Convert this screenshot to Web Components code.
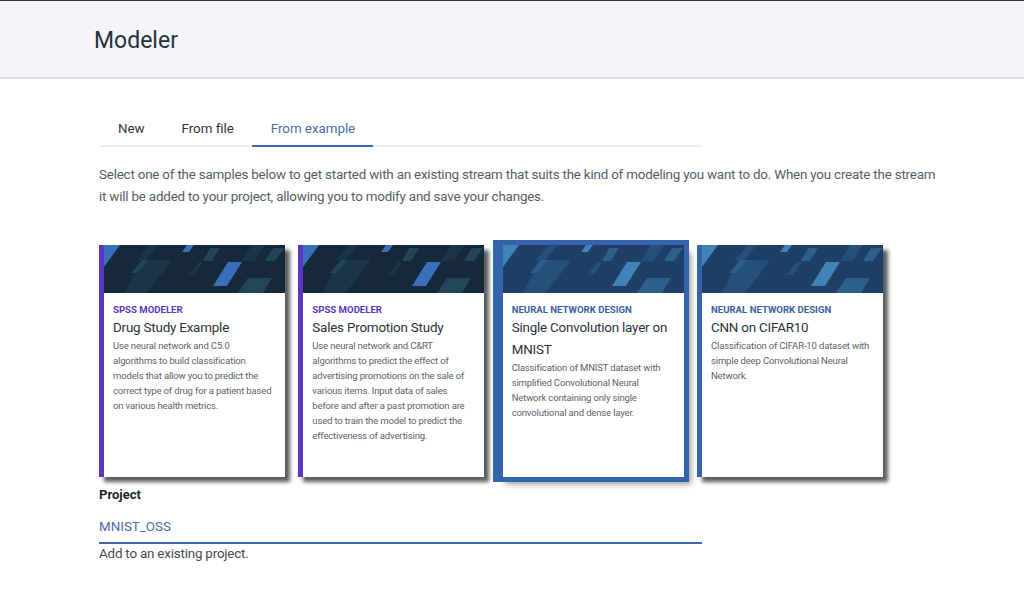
<!doctype html>
<html>
<head>
<meta charset="utf-8">
<style>
  html, body { margin: 0; background: #fff; }
  body { font-family: Roboto, "Noto Sans", sans-serif; overflow: hidden; }
</style>
</head>
<body>

<template class="page-header-template">
  <style>
    :host {
      display: block;
      height: 76px;
      background: #f4f5f9;
      border-top: 1px solid #2d3a45;
      border-bottom: 2px solid #dcdee3;
    }
    h1 {
      margin: 0;
      padding: 24px 0 0 94px;
      font-size: 23px;
      line-height: 32px;
      font-weight: 400;
      color: #26313d;
    }
  </style>
  <h1><slot></slot></h1>
</template>

<template class="tab-bar-template">
  <style>
    :host {
      display: flex;
      width: 603px;
      height: 37px;
      border-bottom: 2px solid #eceef0;
      box-sizing: border-box;
    }
  </style>
  <slot></slot>
</template>

<template class="tab-item-template">
  <style>
    :host {
      display: block;
      height: 37px;
      box-sizing: border-box;
      padding: 9px 18px 0 19px;
      font-size: 13.4px;
      letter-spacing: -0.05px;
      line-height: 20px;
      color: #2d3640;
      white-space: nowrap;
    }
    :host([active]) {
      color: #4b6aa8;
      border-bottom: 2px solid #3b68ae;
    }
  </style>
  <slot></slot>
</template>

<template class="sample-card-template">
  <style>
    :host {
      display: block;
      --accent: #5a36c2;
      --sky: #15293a;
      --bright: #3a6fbb;
      --faint: #234559;
      --dim: #1a3448;
      height: 232px;
      box-sizing: border-box;
      background: #fff;
      border-left: 5px solid var(--accent);
      box-shadow: 5px 5px 4px #5c5c5c;
    }
    :host([family="nn"]) {
      --accent: #3465ab;
      --sky: #1f3f66;
      --bright: #4083b6;
      --faint: #2d5f8c;
      --dim: #26507a;
    }
    :host([selected]) {
      outline: 5px solid #3465ab;
      box-shadow: 7px 7px 6px #9a9a9a;
    }
    svg { display: block; width: 100%; height: 48px; }
    .body { padding: 10px 10px 0 9px; }
    .kind {
      font-size: 9.6px;
      line-height: 14px;
      font-weight: 700;
      color: var(--accent);
    }
    :host([family="nn"]) .kind { color: #3c5f9c; }
    .title {
      font-size: 13.4px;
      letter-spacing: -0.2px;
      line-height: 22px;
      color: #2a323b;
    }
    .text {
      margin-top: -1px;
      font-size: 9.5px;
      letter-spacing: -0.15px;
      line-height: 15px;
      color: #5b6269;
    }
  </style>
  <svg viewBox="0 0 181 48" preserveAspectRatio="none">
    <rect width="181" height="48" fill="var(--sky)"/>
    <polygon points="0,0 16,0 0,22" fill="var(--bright)"/>
    <polygon points="83,0 90,0 85,7 78,7" fill="var(--bright)"/>
    <polygon points="124,17 138,17 123,41 109,41" fill="var(--bright)"/>
    <polygon points="37,15 68,15 43,48 20,48" fill="var(--dim)"/>
    <polygon points="38,15 45,15 33,28 27,28" fill="var(--faint)"/>
    <polygon points="144,33 168,33 159,48 134,48" fill="var(--faint)"/>
    <polygon points="46,0 55,0 42,15 33,15" fill="var(--dim)"/>
    <polygon points="106,3 116,3 108,16 99,16" fill="var(--faint)"/>
    <polygon points="95,17 99,17 91,30 84,30" fill="var(--dim)"/>
    <polygon points="148,0 161,0 151,16 138,16" fill="var(--dim)"/>
    <polygon points="169,3 180,3 171,16 161,16" fill="var(--faint)"/>
  </svg>
  <div class="body">
    <div class="kind"><slot name="kind"></slot></div>
    <div class="title"><slot name="title"></slot></div>
    <div class="text"><slot></slot></div>
  </div>
</template>

<template class="project-field-template">
  <style>
    :host { display: block; width: 603px; color: #2d3640; }
    .label { font-size: 13px; line-height: 18px; font-weight: 700; color: #1f262d; }
    .value {
      margin-top: 12px;
      padding-top: 1px;
      height: 25px;
      font-size: 13.4px;
      line-height: 20px;
      color: #4b6aa8;
      border-bottom: 2px solid #3b68ae;
    }
    .help { font-size: 13.4px; letter-spacing: -0.2px; line-height: 20px; color: #454c54; }
  </style>
  <div class="label"><slot name="label"></slot></div>
  <div class="value"><slot name="value"></slot></div>
  <div class="help"><slot name="help"></slot></div>
</template>

<page-header>Modeler</page-header>

<main style="display:block;padding:31px 0 0 99px">
  <tab-bar>
    <tab-item>New</tab-item>
    <tab-item>From file</tab-item>
    <tab-item active>From example</tab-item>
  </tab-bar>

  <p style="margin:17px 0 0;width:838px;font-size:13.4px;letter-spacing:-0.2px;line-height:22px;color:#565d66">
    Select one of the samples below to get started with an existing stream that suits the kind of modeling you want to do. When you create the stream it will be added to your project, allowing you to modify and save your changes.
  </p>

  <div style="display:grid;grid-template-columns:repeat(4,186px);column-gap:13.33px;margin-top:37px">
    <sample-card>
      <span slot="kind">SPSS MODELER</span>
      <span slot="title">Drug Study Example</span>
      Use neural network and C5.0 algorithms to build classification models that allow you to predict the correct type of drug for a patient based on various health metrics.
    </sample-card>
    <sample-card>
      <span slot="kind">SPSS MODELER</span>
      <span slot="title">Sales Promotion Study</span>
      Use neural network and C&amp;RT algorithms to predict the effect of advertising promotions on the sale of various items. Input data of sales before and after a past promotion are used to train the model to predict the effectiveness of advertising.
    </sample-card>
    <sample-card family="nn" selected>
      <span slot="kind">NEURAL NETWORK DESIGN</span>
      <span slot="title">Single Convolution layer on MNIST</span>
      Classification of MNIST dataset with simplified Convolutional Neural Network containing only single convolutional and dense layer.
    </sample-card>
    <sample-card family="nn">
      <span slot="kind">NEURAL NETWORK DESIGN</span>
      <span slot="title">CNN on CIFAR10</span>
      Classification of CIFAR-10 dataset with simple deep Convolutional Neural Network.
    </sample-card>
  </div>

  <project-field style="margin-top:9px">
    <span slot="label">Project</span>
    <span slot="value">MNIST_OSS</span>
    <span slot="help">Add to an existing project.</span>
  </project-field>
</main>

<script>
// Base class: clones the template named after the tag into an open shadow root.
class TemplatedElement extends HTMLElement {
  constructor() {
    super()
    const template = document.querySelector("." + this.localName + "-template")
    this.attachShadow({ mode: "open" }).appendChild(template.content.cloneNode(true))
  }
}

customElements.define("page-header", class extends TemplatedElement {})
customElements.define("tab-bar", class extends TemplatedElement {})
customElements.define("tab-item", class extends TemplatedElement {})
customElements.define("sample-card", class extends TemplatedElement {})
customElements.define("project-field", class extends TemplatedElement {})
</script>
</body>
</html>
